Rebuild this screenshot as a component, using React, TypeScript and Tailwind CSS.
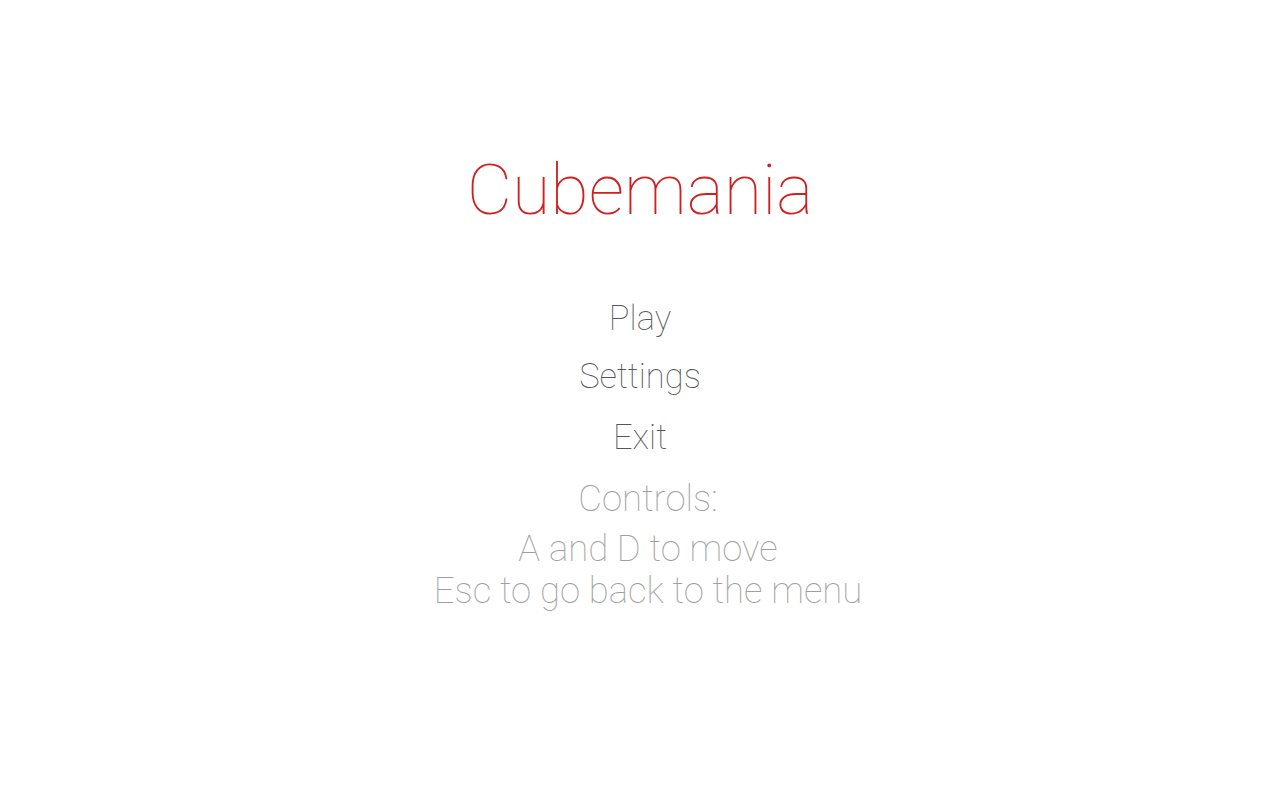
export default function App() {
  return (
    <div className="w-full h-[800px] bg-white flex flex-col items-center font-['Roboto','Noto_Sans',sans-serif] font-thin">
      <h1 className="mt-[150px] text-[70px] leading-[80px] font-thin text-[#d01f1f]">Cubemania</h1>

      <nav className="mt-[72px] flex flex-col items-center gap-[26px] text-[34.5px] leading-[32px] text-[#555555]">
        <button className="font-thin">Play</button>
        <button className="font-thin">Settings</button>
        <button className="font-thin mt-[3px]">Exit</button>
      </nav>

      <div className="mt-[25px] ml-4 flex flex-col items-center text-[36.5px] leading-[42px] text-[#9e9e9e]">
        <p>Controls:</p>
        <p className="mt-[8px]">A and D to move</p>
        <p>Esc to go back to the menu</p>
      </div>
    </div>
  )
}
